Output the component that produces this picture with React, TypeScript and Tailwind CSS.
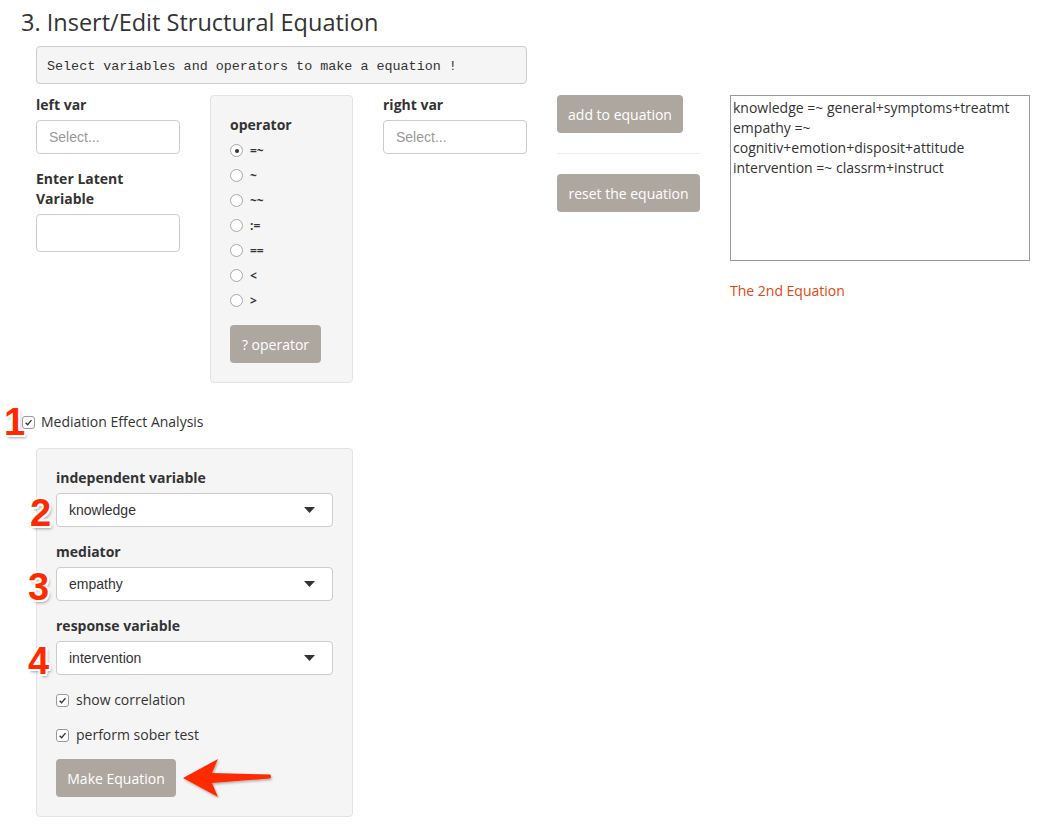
import React from "react";

const ui = { fontFamily: '"Open Sans", "Liberation Sans", sans-serif' };
const helv = { fontFamily: '"Liberation Sans", Arial, sans-serif' };
const mono = { fontFamily: '"Liberation Mono", "DejaVu Sans Mono", monospace' };

function Num({ n, className }: { n: string; className: string }) {
  return (
    <span
      className={"absolute font-bold text-[38px] leading-none text-[#ff2a00] " + className}
      style={{
        ...helv,
        textShadow:
          "2px 0 0 #fff, -2px 0 0 #fff, 0 2px 0 #fff, 0 -2px 0 #fff, 1.5px 1.5px 0 #fff, -1.5px -1.5px 0 #fff, 1.5px -1.5px 0 #fff, -1.5px 1.5px 0 #fff, 2px 3px 3px rgba(0,0,0,0.35)",
      }}
    >
      {n}
    </span>
  );
}

function Check() {
  return (
    <span className="inline-flex h-[13px] w-[13px] items-center justify-center rounded-[3px] border border-[#9a9a9a] bg-white">
      <svg width="9" height="9" viewBox="0 0 10 10">
        <path d="M1.8 5.2 L4 7.4 L8.3 2.3" fill="none" stroke="#333" strokeWidth="1.5" />
      </svg>
    </span>
  );
}

function Radio({ checked }: { checked?: boolean }) {
  return (
    <span className="inline-flex h-[13px] w-[13px] items-center justify-center rounded-full border border-[#a8a8a8] bg-white">
      {checked && <span className="h-[4px] w-[4px] rounded-full bg-[#333]" />}
    </span>
  );
}

function SelectBox({ value }: { value: string }) {
  return (
    <div className="flex h-[34px] w-[277px] items-center justify-between rounded-[4px] border border-[#ccc] bg-white pl-[12px] pr-[17px] text-[14px] text-[#333]" style={helv}>
      <span>{value}</span>
      <svg width="11" height="6" viewBox="0 0 11 6">
        <path d="M0 0 L11 0 L5.5 6 Z" fill="#333" />
      </svg>
    </div>
  );
}

const btn = "rounded-[4px] bg-[#aea79f] text-white text-[14px] flex items-center justify-center";

export default function App() {
  const ops = ["=~", "~", "~~", ":=", "==", "<", ">"];
  return (
    <div className="relative min-h-[834px] w-[1053px] bg-white text-[#333]" style={ui}>
      <h1 className="pl-[21px] pt-[6px] text-[23.5px] leading-[32px] font-normal text-[#333]">3. Insert/Edit Structural Equation</h1>

      <div className="ml-[36px] mt-[8px] flex h-[38px] w-[491px] items-center rounded-[4px] border border-[#ccc] bg-[#f5f5f5] pl-[10px] pt-[4px] text-[13.4px] text-[#333]" style={mono}>
        Select variables and operators to make a equation !
      </div>

      <div className="ml-[36px] mt-[11px] flex items-start">
        {/* left var */}
        <div className="w-[144px]">
          <div className="text-[14px] font-bold leading-[20px]">left var</div>
          <div className="mt-[5px] flex h-[34px] items-center rounded-[4px] border border-[#ccc] bg-white pl-[12px] text-[14px] text-[#999]" style={helv}>Select...</div>
          <div className="mt-[15px] text-[14px] font-bold leading-[20px]">Enter Latent<br />Variable</div>
          <div className="mt-[5px] h-[38px] rounded-[4px] border border-[#ccc] bg-white" />
        </div>

        {/* operator well */}
        <div className="ml-[30px] h-[288px] w-[143px] rounded-[4px] border border-[#e3e3e3] bg-[#f5f5f5] pl-[19px] pt-[19px]">
          <div className="text-[14px] font-bold leading-[20px]">operator</div>
          <div className="mt-[3px] flex flex-col">
            {ops.map((o, i) => (
              <div key={o} className="flex h-[25px] items-center gap-[7px]">
                <Radio checked={i === 0} />
                <span className="text-[12px] font-bold text-[#333]">{o}</span>
              </div>
            ))}
          </div>
          <div className={btn + " mt-[12px] h-[38px] w-[91px]"}>? operator</div>
        </div>

        {/* right var */}
        <div className="ml-[30px] w-[144px]">
          <div className="text-[14px] font-bold leading-[20px]">right var</div>
          <div className="mt-[5px] flex h-[34px] items-center rounded-[4px] border border-[#ccc] bg-white pl-[12px] text-[14px] text-[#999]" style={helv}>Select...</div>
        </div>

        {/* buttons */}
        <div className="ml-[30px] w-[143px]">
          <div className={btn + " h-[38px] w-[126px]"}>add to equation</div>
          <div className="mt-[20px] mb-[20px] h-px bg-[#eee]" />
          <div className={btn + " h-[38px] w-[143px]"}>reset the equation</div>
        </div>

        {/* textarea */}
        <div className="ml-[30px] w-[300px]">
          <div className="h-[166px] border border-[#999] bg-white px-[2px] pt-[2px] text-[14px] leading-[20px] text-[#333]">
            knowledge =~ general+symptoms+treatmt<br />
            empathy =~<br />
            cognitiv+emotion+disposit+attitude<br />
            intervention =~ classrm+instruct
          </div>
          <div className="mt-[20px] text-[14px] leading-[20px] text-[#dd4814]">The 2nd Equation</div>
        </div>
      </div>

      {/* mediation checkbox */}
      <div className="relative mt-[29px] ml-[22px] flex items-center gap-[6px] text-[14px] leading-[20px]">
        <Num n="1" className="left-[-18px] top-[-9px]" />
        <Check />
        <span>Mediation Effect Analysis</span>
      </div>

      {/* mediation well */}
      <div className="ml-[36px] mt-[16px] w-[317px] rounded-[4px] border border-[#e3e3e3] bg-[#f5f5f5] px-[19px] pt-[19px] pb-[19px]">
        <div className="text-[14px] font-bold leading-[20px]">independent variable</div>
        <div className="relative mt-[5px]">
          <Num n="2" className="left-[-26px] top-[1px]" />
          <SelectBox value="knowledge" />
        </div>
        <div className="mt-[15px] text-[14px] font-bold leading-[20px]">mediator</div>
        <div className="relative mt-[5px]">
          <Num n="3" className="left-[-28px] top-[1px]" />
          <SelectBox value="empathy" />
        </div>
        <div className="mt-[15px] text-[14px] font-bold leading-[20px]">response variable</div>
        <div className="relative mt-[5px]">
          <Num n="4" className="left-[-28px] top-[1px]" />
          <SelectBox value="intervention" />
        </div>
        <div className="mt-[15px] flex items-center gap-[7px] text-[14px] leading-[20px]">
          <Check />
          <span>show correlation</span>
        </div>
        <div className="mt-[15px] flex items-center gap-[7px] text-[14px] leading-[20px]">
          <Check />
          <span>perform sober test</span>
        </div>
        <div className="relative mt-[14px] w-fit">
          <div className={btn + " h-[38px] w-[120px]"}>Make Equation</div>
          <svg className="absolute left-[126px] top-[-1px]" width="92" height="40" viewBox="0 0 92 40">
            <defs>
              <filter id="sh" x="-10%" y="-20%" width="130%" height="150%">
                <feDropShadow dx="1" dy="1.5" stdDeviation="1" floodColor="#000" floodOpacity="0.3" />
              </filter>
            </defs>
            <path d="M1 20 L36 1 L30 15 L88 16.5 Q90 18.5 88 20.5 L30 25 L36 39 Z" fill="#ff2a00" filter="url(#sh)" />
          </svg>
        </div>
      </div>
    </div>
  );
}
